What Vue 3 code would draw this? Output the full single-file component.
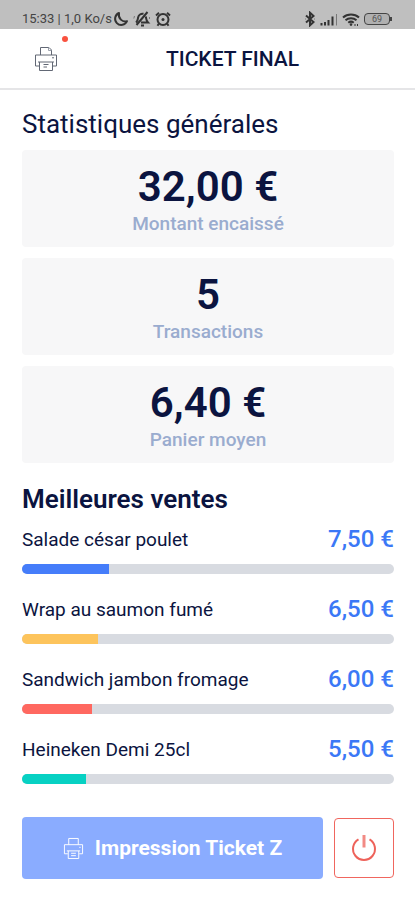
<script setup>
const stats = [
  { value: '32,00 €', label: 'Montant encaissé' },
  { value: '5', label: 'Transactions' },
  { value: '6,40 €', label: 'Panier moyen' },
]

const sales = [
  { name: 'Salade césar poulet', price: '7,50 €', share: 23.4, tone: 'blue' },
  { name: 'Wrap au saumon fumé', price: '6,50 €', share: 20.3, tone: 'yellow' },
  { name: 'Sandwich jambon fromage', price: '6,00 €', share: 18.8, tone: 'red' },
  { name: 'Heineken Demi 25cl', price: '5,50 €', share: 17.2, tone: 'teal' },
]
</script>

<template>
  <div class="screen">
    <div class="status">
      <div class="status-group">
        <span class="status-text">15:33 | 1,0 Ko/s</span>
        <svg class="status-icon moon" viewBox="0 0 16 16" aria-hidden="true">
          <path d="M6 2a6.200 6.200 0 1 0 8 8.200C9.500 11.500 4.800 7.500 6 2z" />
        </svg>
        <svg class="status-icon bell" viewBox="0 0 18 16" aria-hidden="true">
          <path d="M3 11.500c2-1.500 1.700-3 2.100-5C5.600 4 8 2.200 10.500 2.800M12.800 5.500c.6 2.500.2 4 2.200 6H8M14.500 1 3.500 14M8 14.500h3" />
          <path class="faint" d="M1.500 5 .8 7.500M16.500 6v2" />
        </svg>
        <svg class="status-icon alarm" viewBox="0 0 16 16" aria-hidden="true">
          <circle cx="8" cy="8.500" r="5.500" />
          <path d="M1 4.500 4 1.800M15 4.500 12 1.800M3.800 12.800 2.500 14.800M12.200 12.800l1.300 2" />
          <circle class="solid" cx="8" cy="8.500" r="1.500" />
        </svg>
      </div>
      <div class="status-group">
        <svg class="status-icon bluetooth" viewBox="0 0 12 16" aria-hidden="true">
          <path d="M2 4.500 9.500 11 6 14.300V1.700L9.500 5 2 11.500" />
          <path class="faint" d="M1 8h1M10 8h1" />
        </svg>
        <svg class="status-icon signal" viewBox="0 0 18 13" aria-hidden="true">
          <path class="bars" d="M1.500 12.500V10M5 12.500V9M8.500 12.500V7M12.500 12.500V3.500" />
          <path class="faint" d="M16.500 12.500V1" />
        </svg>
        <svg class="status-icon wifi" viewBox="0 0 18 13" aria-hidden="true">
          <path d="M1 4.500c4.500-4 11.500-4 16 0M3.500 7.300c3-2.700 8-2.700 11 0M6.300 9.800c1.500-1.300 3.900-1.300 5.400 0" />
          <circle class="solid" cx="9" cy="11.600" r="1.300" />
          <path class="dots" d="M12.500 12h1M15 12h1" />
        </svg>
        <span class="battery">69</span>
      </div>
    </div>

    <header class="header">
      <button class="printer" type="button" aria-label="Imprimante">
        <svg viewBox="0 0 24 26" aria-hidden="true">
          <path d="M6.500 9V1.500h8.500L17.500 4v5M5 20H1.500V9h21v11H19" />
          <path class="pale" d="M14.500 1.500v3h3" />
          <path d="M4 16h16M5.500 16v8.500h13V16M18 11.800h2M9.500 18.500h5M9.500 21h3.500" />
        </svg>
        <span class="badge"></span>
      </button>
      <h1 class="title">TICKET FINAL</h1>
    </header>

    <main class="content">
      <section class="stats">
        <h2 class="heading light">Statistiques générales</h2>
        <div v-for="stat in stats" :key="stat.label" class="card">
          <strong class="value">{{ stat.value }}</strong>
          <span class="label">{{ stat.label }}</span>
        </div>
      </section>

      <section class="sales">
        <h2 class="heading">Meilleures ventes</h2>
        <ul class="list">
          <li v-for="sale in sales" :key="sale.name" class="sale">
            <div class="line">
              <span class="name">{{ sale.name }}</span>
              <span class="price">{{ sale.price }}</span>
            </div>
            <div class="track">
              <div class="fill" :class="sale.tone" :style="{ width: sale.share + '%' }"></div>
            </div>
          </li>
        </ul>
      </section>

      <div class="actions">
        <button class="print" type="button">
          <svg viewBox="0 0 22 24" aria-hidden="true">
            <path d="M6 8V1.500h10V8M5 17.500H1.500V8h19v9.500H17M4 14.500h14M5.500 14.500v8h11v-8M17 10.800h1.500M8.500 17h5M8.500 19.500h5" />
          </svg>
          <span>Impression Ticket Z</span>
        </button>
        <button class="power" type="button" aria-label="Quitter">
          <svg viewBox="0 0 26 26" aria-hidden="true">
            <path d="M7.500 4.400a11 11 0 1 0 11 0" />
            <path class="stem" d="M13 0v12.500" />
          </svg>
        </button>
      </div>
    </main>
  </div>
</template>

<style>
body {
  background: #fff;
}
</style>

<style scoped>
.screen {
  font-family: Roboto, "Liberation Sans", sans-serif;
  color: #0b1440;
  background: #fff;
}

svg {
  fill: none;
  stroke: currentColor;
}

button {
  font: inherit;
  padding: 0;
  cursor: pointer;
}

.status {
  display: flex;
  justify-content: space-between;
  box-sizing: border-box;
  height: 29px;
  padding: 9px 25px 0 22px;
  background: #bfbfbf;
  color: #333;
}

.status-group {
  display: flex;
  align-items: center;
  height: 20px;
  gap: 4px;
}

.status-text {
  font-size: 13px;
  line-height: 20px;
  color: #444;
  margin-right: -3px;
}

.status-icon {
  width: 16px;
  height: 16px;
  stroke-width: 2;
}

.moon {
  stroke-linejoin: round;
}

.bell {
  width: 18px;
}

.bluetooth {
  width: 12px;
}

.signal {
  width: 18px;
  height: 13px;
}

.wifi {
  width: 18px;
  height: 13px;
}

.faint {
  stroke: #777;
  stroke-width: 1;
}

.solid {
  fill: currentColor;
  stroke: none;
}

.battery {
  box-sizing: border-box;
  position: relative;
  width: 26px;
  height: 12px;
  border: 1px solid #444;
  border-radius: 4px;
  font-size: 9px;
  line-height: 10px;
  text-align: center;
  color: #555;
  background: #b0b0b0;
}

.battery::after {
  content: "";
  position: absolute;
  right: -3px;
  top: 3px;
  width: 2px;
  height: 4px;
  background: #444;
}

.header {
  display: grid;
  grid-template-columns: 48px 1fr;
  align-items: center;
  height: 59px;
  padding: 0 22px 0 24px;
  border-bottom: 2px solid #e5e5e7;
}

.printer {
  position: relative;
  display: flex;
  align-items: center;
  justify-content: center;
  width: 44px;
  height: 48px;
  border: 0;
  background: none;
  color: #626875;
}

.printer svg {
  width: 24px;
  height: 26px;
  stroke-width: 1;
}

.pale {
  stroke: #9aa0ab;
}

.badge {
  position: absolute;
  top: 1px;
  right: 0;
  width: 6px;
  height: 6px;
  border-radius: 50%;
  background: #f9523f;
}

.title {
  margin: 0;
  font-size: 21px;
  line-height: 26px;
  font-weight: 500;
  text-align: center;
}

.content {
  padding: 19px 21px 20px 22px;
}

.stats {
  display: grid;
  gap: 11px;
}

.heading {
  margin: 0;
  font-size: 26px;
  line-height: 30px;
  font-weight: 600;
}

.light {
  font-weight: 400;
}

.card {
  display: flex;
  flex-direction: column;
  align-items: center;
  padding: 12px 0 11px;
  border-radius: 4px;
  background: #f7f7f8;
}

.value {
  font-size: 42px;
  line-height: 50px;
  font-weight: 600;
}

.label {
  font-size: 19px;
  line-height: 24px;
  font-weight: 500;
  color: #9aaccf;
}

.sales {
  margin-top: 21px;
}

.list {
  list-style: none;
  margin: 9px 0 0;
  padding: 0;
  display: grid;
  gap: 19px;
}

.line {
  display: flex;
  justify-content: space-between;
  align-items: center;
  height: 32px;
  margin-bottom: 9px;
}

.name {
  font-size: 19px;
}

.price {
  font-size: 24px;
  font-weight: 500;
  color: #3b78f6;
}

.track {
  height: 10px;
  border-radius: 5px;
  overflow: hidden;
  background: #d8dbe1;
}

.fill {
  height: 100%;
}

.blue {
  background: #457dfa;
}

.yellow {
  background: #fdc45c;
}

.red {
  background: #ff6860;
}

.teal {
  background: #07d1c3;
}

.actions {
  display: flex;
  align-items: center;
  gap: 11px;
  margin-top: 33px;
}

.print {
  flex: 1;
  display: flex;
  align-items: center;
  justify-content: center;
  gap: 11px;
  height: 62px;
  border: 0;
  border-radius: 4px;
  background: #8aacff;
  color: #fff;
  font-size: 21px;
  font-weight: 700;
}

.print svg {
  width: 21px;
  height: 23px;
  stroke-width: 1;
}

.power {
  display: flex;
  align-items: center;
  justify-content: center;
  width: 60px;
  height: 60px;
  border: 1px solid #f0665e;
  border-radius: 4px;
  background: #fff;
  color: #ee625a;
}

.power svg {
  width: 26px;
  height: 26px;
  stroke-width: 2;
}

.stem {
  stroke: #f28a84;
  stroke-width: 3;
}
</style>
